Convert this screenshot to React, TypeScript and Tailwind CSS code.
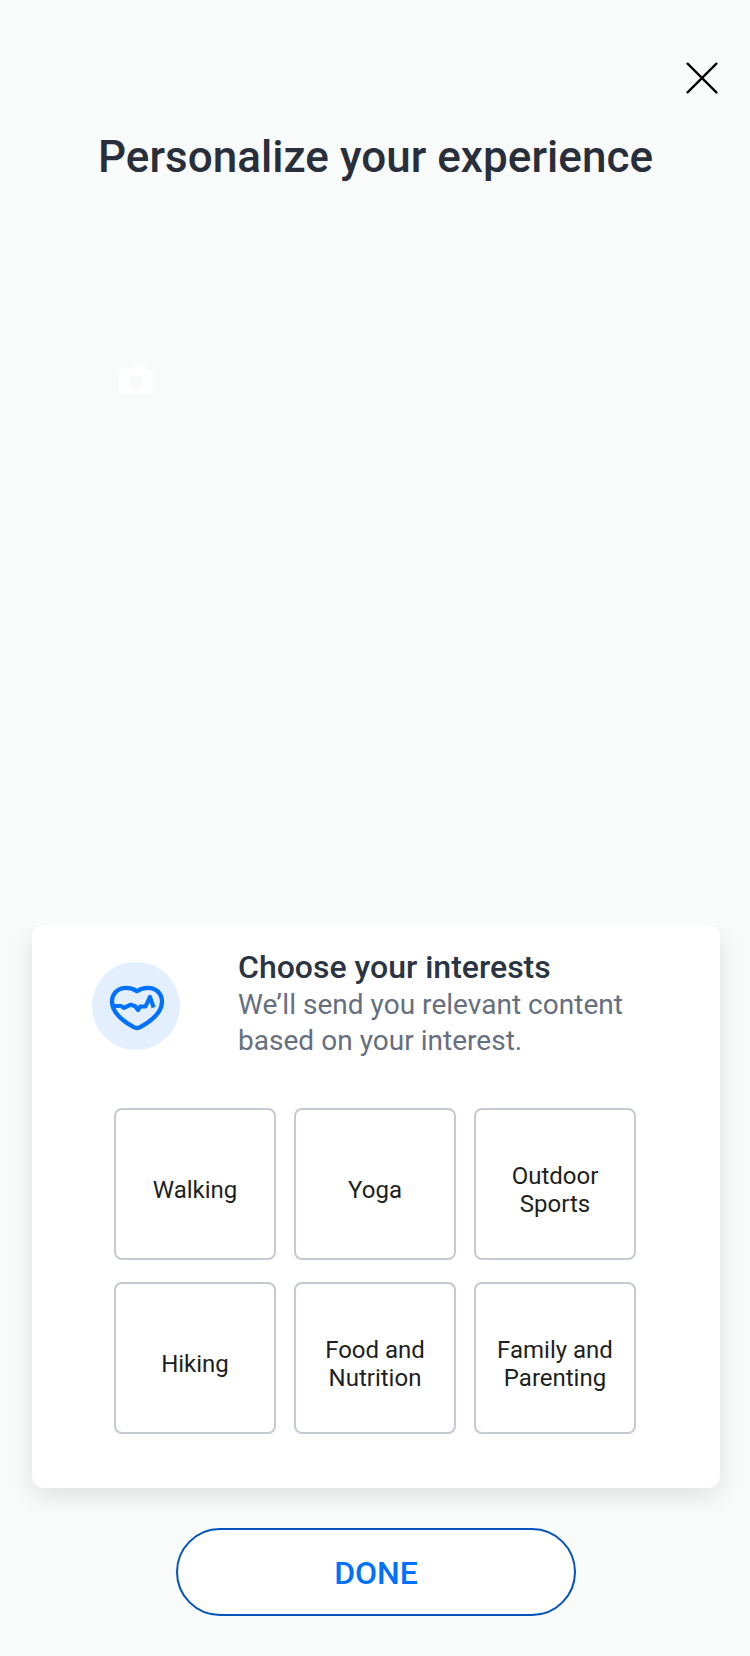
const interests = ["Walking", "Yoga", "Outdoor Sports", "Hiking", "Food and Nutrition", "Family and Parenting"];

function CloseIcon() {
  return (
    <svg width="32" height="32" viewBox="0 0 32 32" fill="none" stroke="#000" strokeWidth="2.3" strokeLinecap="round">
      <path d="M1.6 1.6 30.4 30.4M30.4 1.6 1.6 30.4" />
    </svg>
  );
}

function CameraIcon() {
  return (
    <svg width="34" height="30" viewBox="0 0 34 30" fill="#fff">
      <path
        fillRule="evenodd"
        d="M2.5 5H3.5C3.7 3.8 4.2 3.3 5.2 3.3H8.6C9.6 3.3 10.2 3.8 10.5 5H13.2C14.5 4.8 14.6 0 18.5 0H23.2C27.2 0 27 4.8 28.6 5H31.2A2.5 2.5 0 0 1 33.7 7.5V26.6A2.5 2.5 0 0 1 31.2 29.1H2.5A2.5 2.5 0 0 1 0 26.6V7.5A2.5 2.5 0 0 1 2.5 5ZM17 10.2A7.1 7.1 0 1 0 17 24.4A7.1 7.1 0 1 0 17 10.2Z"
      />
    </svg>
  );
}

function HeartPulseIcon() {
  return (
    <svg width="88" height="88" viewBox="0 0 88 88" fill="none" stroke="#0071ff" strokeWidth="4.3" strokeLinecap="round" strokeLinejoin="round">
      <path d="M45 29.2C41.5 26.8 38.5 25.8 34.5 25.8C26 25.8 20 31.5 20 39.5C20 50.5 31.5 59.5 41.8 65.1C44.2 66.4 45.8 66.4 48.2 65.1C58.5 59.5 70 50.5 70 39.5C70 31.5 64 25.8 55.5 25.8C51.5 25.8 48.5 26.8 45 29.2Z" />
      <path strokeWidth="4.1" strokeLinecap="butt" d="M21 44H29L32 45.9L38.7 42.7L43.3 44.3L46 48.2L48.2 44.5H53.5L58 34.8L61.6 45.5" />
    </svg>
  );
}

export default function App() {
  return (
    <main className="flex h-[1656px] w-[750px] flex-col overflow-hidden bg-[#f9fbfa] font-[Roboto,sans-serif]">
      <div className="flex justify-end pt-[62px] pr-8">
        <button aria-label="Close">
          <CloseIcon />
        </button>
      </div>
      <h1 className="mt-[37px] pl-px text-center text-[44px] leading-[52px] font-medium tracking-[0.04px] text-[#292e3b]">
        Personalize your experience
      </h1>
      <div className="mt-[182px] ml-[119px] h-[30px]">
        <CameraIcon />
      </div>
      <div className="mt-[530px] h-[603px] shrink-0 overflow-hidden px-[32px]">
        <section className="h-[563px] w-[688px] rounded-xl bg-white shadow-[0_8px_24px_rgba(0,0,0,0.1)]">
          <div className="flex pt-[24px] pl-[60px]">
            <div className="mt-[13px] size-[88px] shrink-0 rounded-full bg-[#e3efff]">
              <HeartPulseIcon />
            </div>
            <div className="ml-[58px]">
              <h2 className="text-[32px] leading-[36px] font-medium text-[#2b3442]">Choose your interests</h2>
              <p className="mt-[2px] w-[420px] text-[28px] leading-[36px] tracking-[0.03px] text-[#666f80]">
                We’ll send you relevant content based on your interest.
              </p>
            </div>
          </div>
          <div className="mt-[49px] ml-[82px] grid w-[522px] grid-cols-3 gap-x-[18px] gap-y-[22px]">
            {interests.map((name) => (
              <button
                key={name}
                className="flex h-[152px] items-center justify-center rounded-lg border-2 border-[#c5c9d1] px-[16px] pt-[12px] text-center text-[24px] leading-[28px] text-[#1d1f22]"
              >
                {name}
              </button>
            ))}
          </div>
        </section>
      </div>
      <button className="ml-[176px] h-[88px] w-[400px] shrink-0 rounded-full border-2 border-[#0052bd] bg-white pt-[2px] text-[32px] leading-[36px] font-medium text-[#0071ff]">
        DONE
      </button>
    </main>
  );
}
